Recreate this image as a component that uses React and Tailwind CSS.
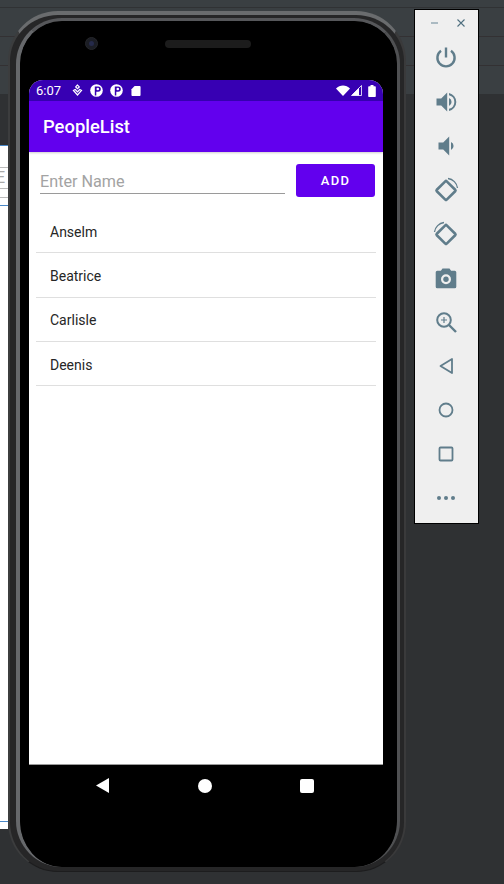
const sans = { fontFamily: 'Roboto, sans-serif' };

function Controls() {
  const c = '#607d8b';
  return (
    <div className="absolute left-[414px] top-[9px] w-[65px] h-[515px] bg-[#efefef] border border-black flex flex-col items-center">
      <div className="w-full h-[26px] flex items-center justify-center gap-[16px] pl-[2px]">
        <svg width="10" height="10" viewBox="0 0 10 10"><path d="M1 5h7" stroke="#7d97a3" strokeWidth="1.2" /></svg>
        <svg width="10" height="10" viewBox="0 0 10 10"><path d="M1.500 1.500l7 7M8.500 1.500l-7 7" stroke="#4f6f7f" strokeWidth="1.1" /></svg>
      </div>
      <div className="flex flex-col items-center -ml-[2px]">
        {[
          <svg width="24" height="24" viewBox="0 0 24 24" fill="none" stroke={c} strokeWidth="2.400" key="p"><path d="M12 1.500v10" /><path d="M7 4.800a8.600 8.600 0 1 0 10 0" /></svg>,
          <svg width="24" height="24" viewBox="0 0 24 24" fill={c} key="v"><path d="M2.500 8.500v7h4.700l6 6v-19l-6 6z" /><path d="M15 8v8a4.400 4.400 0 0 0 0-8z" /><path d="M15 3v2.200a7 7 0 0 1 0 13.600V21a9.200 9.200 0 0 0 0-18z" /></svg>,
          <svg width="24" height="24" viewBox="0 0 24 24" fill={c} key="d"><path d="M4.500 8.500v7h4.700l6 6v-19l-6 6z" /><path d="M17 8v8a4.400 4.400 0 0 0 0-8z" /></svg>,
          <svg width="26" height="26" viewBox="0 0 26 26" key="r"><rect x="6" y="6.500" width="14" height="14" rx="1" transform="rotate(45 13 13.500)" fill="none" stroke={c} strokeWidth="2.600" /><path d="M15 1.500a11 11 0 0 1 9.500 9.500" fill="none" stroke={c} strokeWidth="1.300" /></svg>,
          <svg width="26" height="26" viewBox="0 0 26 26" key="r2"><rect x="6" y="6.500" width="14" height="14" rx="1" transform="rotate(45 13 13.500)" fill="none" stroke={c} strokeWidth="2.600" /><path d="M1.500 11A11 11 0 0 1 11 1.500" fill="none" stroke={c} strokeWidth="1.300" /></svg>,
          <svg width="24" height="24" viewBox="0 0 24 24" key="c"><path fillRule="evenodd" fill={c} d="M8.500 2.500h7l1.600 2.200h3.600A1.600 1.600 0 0 1 22.300 6.300v14.400a1.600 1.600 0 0 1-1.600 1.600H3.300a1.600 1.600 0 0 1-1.600-1.600V6.300a1.600 1.600 0 0 1 1.600-1.600h3.600zM12 8.300a5 5 0 1 0 0 10 5 5 0 0 0 0-10z" /><circle cx="12" cy="13.300" r="2.700" fill={c} /></svg>,
          <svg width="24" height="24" viewBox="0 0 24 24" fill="none" stroke={c} key="z"><circle cx="10" cy="10" r="6.800" strokeWidth="2" /><path d="M15 15l7 7" strokeWidth="2.400" /><path d="M10 7v6M7 10h6" strokeWidth="1.200" /></svg>,
          <svg width="24" height="24" viewBox="0 0 24 24" fill="none" stroke={c} strokeWidth="1.800" key="b"><path d="M18 5v14L6.500 12z" strokeLinejoin="round" /></svg>,
          <svg width="24" height="24" viewBox="0 0 24 24" fill="none" stroke={c} strokeWidth="1.800" key="h"><circle cx="12" cy="12" r="6.500" /></svg>,
          <svg width="24" height="24" viewBox="0 0 24 24" fill="none" stroke={c} strokeWidth="1.800" key="s"><rect x="5.500" y="5.500" width="13" height="13" rx="1" /></svg>,
          <svg width="24" height="24" viewBox="0 0 24 24" fill={c} key="m"><circle cx="5" cy="12" r="2" /><circle cx="12" cy="12" r="2" /><circle cx="19" cy="12" r="2" /></svg>,
        ].map((icon, i) => (
          <div key={i} className="h-[44px] w-[40px] flex items-center justify-center">{icon}</div>
        ))}
      </div>
    </div>
  );
}

function Badge({ className }) {
  return (
    <svg className={className} width="13" height="13" viewBox="0 0 13 13">
      <circle cx="6.500" cy="6.500" r="6.300" fill="white" />
      <path d="M4.800 2.500h3.400a2.500 2.500 0 0 1 0 5.200H6.300v3.800H4.800z" fill="#3700b3" />
      <circle cx="7.800" cy="5" r="1.300" fill="white" />
    </svg>
  );
}

function StatusBar() {
  return (
    <div className="h-[21px] bg-[#3700b3] flex items-center justify-between pl-[7px] pr-[7px] text-white">
      <div className="flex items-center">
        <span className="text-[13px] leading-none w-[35px]" style={sans}>6:07</span>
        <svg width="13" height="13" viewBox="0 0 13 13" fill="none" stroke="white" strokeWidth="1.200"><path d="M6.500 1L4.700 2.900l1.800 1.800 1.800-1.800z" /><path d="M2.500 6.500l4 4.500 4-4.500-1.800-1-2.200 2.300-2.200-2.300z" /></svg>
        <Badge className="ml-[6px]" />
        <Badge className="ml-[7px]" />
        <svg className="ml-[8px]" width="10" height="12" viewBox="0 0 11 12" fill="white"><path d="M4 .5h5.500A1 1 0 0 1 10.500 1.500v9a1 1 0 0 1-1 1h-8a1 1 0 0 1-1-1V4z" /></svg>
      </div>
      <div className="flex items-center">
        <svg width="14" height="11" viewBox="0 0 14 11" fill="white"><path d="M0 3.500C3.800-.5 10.200-.5 14 3.500L7 11z" /></svg>
        <svg width="11" height="11" viewBox="0 0 11 11" className="ml-[1px]"><path d="M.5 10.500L10.500.5v10z" fill="none" stroke="white" strokeWidth="0.800" /><path d="M.5 10.500L8 3v7.500z" fill="white" /></svg>
        <svg width="8" height="12" viewBox="0 0 8 12" fill="white" className="ml-[6px]"><path d="M2.500 0h3v1.200H7a.8.800 0 0 1 .8.800v9.200a.8.800 0 0 1-.8.800H1a.8.800 0 0 1-.8-.8V2A.8.800 0 0 1 1 1.200h1.500z" /></svg>
      </div>
    </div>
  );
}

function Screen() {
  const names = ['Anselm', 'Beatrice', 'Carlisle', 'Deenis'];
  return (
    <div className="w-[354px] h-[685px] rounded-t-[14px] overflow-hidden bg-white border-b border-[#9a9a9a] flex flex-col" style={sans}>
      <StatusBar />
      <div className="h-[51px] bg-[#6200ee] flex items-center pl-[14px] text-white text-[18.400px] font-medium shadow-[0_1px_2px_rgba(0,0,0,0.2)]">PeopleList</div>
      <div className="flex items-start mt-[12px] pl-[11px] pr-[8px]">
        <div className="w-[245px] h-[30px] border-b border-[#9a9a9a] text-[16.200px] leading-[28px] text-[#a3a3a3] pt-[4px]">Enter Name</div>
        <div className="ml-[11px] w-[79px] h-[33px] rounded-[3px] bg-[#6200ee] text-white text-[13px] font-medium tracking-[1.300px] flex items-center justify-center">ADD</div>
      </div>
      <div className="ml-[7px] mr-[7px] mt-[12px]">
        {names.map((n) => (
          <div key={n} className="h-[44.300px] border-b border-[#dfdfdf] flex items-center pl-[14px] pt-[3px] text-[14px] text-[#262626]">{n}</div>
        ))}
      </div>
    </div>
  );
}

function Phone() {
  return (
    <div className="absolute left-[8px] top-[11px] w-[398px] h-[861px] rounded-[50px] bg-[#262627] border-l-[2px] border-r-[2px] border-t-[4px] border-b border-l-[#3c3d3e] border-r-[#3a3a3b] border-t-[#6a6c6e] border-b-[#1d1d1e] pl-[6px] pr-[4px] pt-[3px] pb-[4px]">
      <div className="w-full h-full rounded-[46px] border-l-[4px] border-r-[3px] border-t-[3px] border-l-[#66686b] border-r-[#4f5052] border-t-[#56575a] overflow-hidden">
        <div className="w-full h-full rounded-[42px] bg-black flex flex-col items-start pl-[9px]">
          <div className="h-[59px] w-full relative">
            <div className="absolute left-[56px] top-[16px] w-[13px] h-[13px] rounded-full bg-[#1b1d24] border border-[#26272b] flex items-center justify-center">
              <div className="w-[5px] h-[5px] rounded-full bg-[#252a4a]" />
            </div>
            <div className="absolute left-[136px] top-[19px] w-[86px] h-[8px] rounded-full bg-[#1c1c1c]" />
          </div>
          <Screen />
          <div className="w-[354px] flex items-center justify-between pl-[67px] pr-[69px] pt-[13px]">
            <svg width="14" height="15" viewBox="0 0 14 15" fill="white"><path d="M13 0v15L0 7.500z" /></svg>
            <div className="w-[14px] h-[14px] rounded-full bg-white" />
            <div className="w-[14px] h-[14px] rounded-[2px] bg-white" />
          </div>
        </div>
      </div>
    </div>
  );
}

export default function App() {
  return (
    <div className="relative w-[504px] h-[884px] overflow-hidden bg-[#2f3133]">
      <div className="h-[94px] bg-[#3a3f42] flex flex-col">
        <div className="h-[8px] border-b border-[#303234]" />
        <div className="h-[29px] border-b border-[#333133]" />
        <div className="h-[29px] border-b border-[#333133]" />
      </div>
      <div className="w-[8px] h-[684px] mt-[51px] bg-white border-t border-[#4a88c7] overflow-hidden flex flex-col">
        <div className="h-[22px] border-b border-[#bbb]" />
        <div className="h-[21px] border-b border-[#bbb] text-[#aaa] text-[16px] leading-[20px]" style={sans}><span className="-ml-[4px]">E</span></div>
        <div className="h-[9px] border-b border-[#bbb]" />
        <div className="h-[8px] border-b border-[#4a88c7]" />
        <div className="mt-auto h-[8px] border-t border-[#4a88c7]" />
      </div>
      <Phone />
      <Controls />
    </div>
  );
}
